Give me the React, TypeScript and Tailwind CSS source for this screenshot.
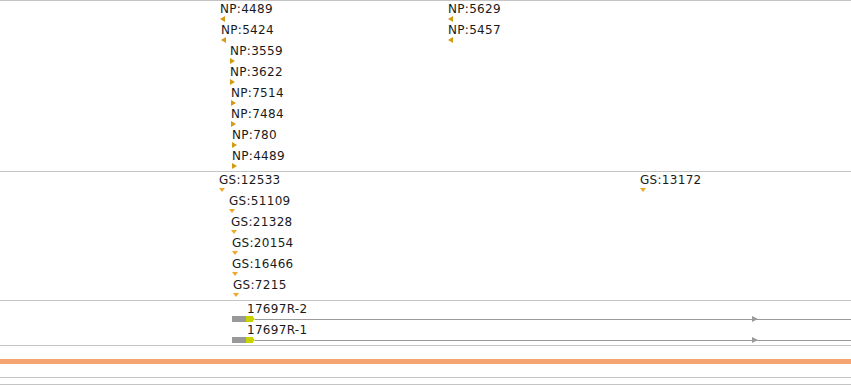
import React from 'react';

type Feature = { label: string; x: number; y: number; dir: 'left' | 'right' | 'down' };

const npFeatures: Feature[] = [
  { label: 'NP:4489', x: 220, y: 1, dir: 'left' },
  { label: 'NP:5424', x: 221, y: 22, dir: 'left' },
  { label: 'NP:3559', x: 230, y: 43, dir: 'right' },
  { label: 'NP:3622', x: 230, y: 64, dir: 'right' },
  { label: 'NP:7514', x: 231, y: 85, dir: 'right' },
  { label: 'NP:7484', x: 231, y: 106, dir: 'right' },
  { label: 'NP:780', x: 232, y: 127, dir: 'right' },
  { label: 'NP:4489', x: 232, y: 148, dir: 'right' },
  { label: 'NP:5629', x: 448, y: 1, dir: 'left' },
  { label: 'NP:5457', x: 448, y: 22, dir: 'left' },
];

const gsFeatures: Feature[] = [
  { label: 'GS:12533', x: 219, y: 1, dir: 'down' },
  { label: 'GS:51109', x: 229, y: 22, dir: 'down' },
  { label: 'GS:21328', x: 231, y: 43, dir: 'down' },
  { label: 'GS:20154', x: 232, y: 64, dir: 'down' },
  { label: 'GS:16466', x: 232, y: 85, dir: 'down' },
  { label: 'GS:7215', x: 233, y: 106, dir: 'down' },
  { label: 'GS:13172', x: 640, y: 1, dir: 'down' },
];

const transcripts = [
  { label: '17697R-2', y: 1 },
  { label: '17697R-1', y: 22 },
];

const Marker = ({ dir }: { dir: Feature['dir'] }) => {
  if (dir === 'down') {
    return (
      <svg width="6" height="4" viewBox="0 0 6 4" className="block">
        <polygon points="0,0 6,0 3,4" fill="#f0a828" />
      </svg>
    );
  }
  return (
    <svg width="5" height="6" viewBox="0 0 5 6" className="block">
      <polygon points={dir === 'left' ? '5,0 0,3 5,6' : '0,0 5,3 0,6'} fill="#d49a12" />
    </svg>
  );
};

const FeatureLabel = ({ f }: { f: Feature }) => (
  <div className="absolute flex flex-col" style={{ left: f.x, top: f.y }}>
    <span className="text-[12px] leading-[14px] tracking-[0.3px] text-[#1a1a1a] whitespace-nowrap">{f.label}</span>
    <div className={f.dir === 'down' ? 'pt-[1px]' : ''}>
      <Marker dir={f.dir} />
    </div>
  </div>
);

export default function App() {
  return (
    <div className="w-[851px] h-[385px] bg-white overflow-hidden" style={{ fontFamily: '"DejaVu Sans", Verdana, sans-serif' }}>
      <div className="relative h-[171px] border-t border-[#c4c4c4]">
        {npFeatures.map((f, i) => (
          <FeatureLabel key={i} f={f} />
        ))}
      </div>
      <div className="relative h-[129px] border-t border-[#c4c4c4]">
        {gsFeatures.map((f, i) => (
          <FeatureLabel key={i} f={f} />
        ))}
      </div>
      <div className="relative h-[45px] border-t border-[#c4c4c4]">
        {transcripts.map((t, i) => (
          <div key={i} className="absolute left-[232px] right-0 flex flex-col" style={{ top: t.y }}>
            <span className="pl-[15px] text-[12px] leading-[14px] tracking-[0.3px] text-[#1a1a1a] whitespace-nowrap">{t.label}</span>
            <div className="flex items-center h-[6px]">
              <div className="w-[14px] h-[6px] bg-[#999999]" />
              <div className="w-[7px] h-[6px] bg-[#c8d400]" />
              <svg width="2" height="6" viewBox="0 0 2 6" className="block">
                <polygon points="0,1 2,3 0,5" fill="#c8d400" />
              </svg>
              <div className="relative flex-1 h-[1px] bg-[#9a9a9a]">
                <svg width="6" height="6" viewBox="0 0 6 6" className="absolute left-[497px] top-[-3px]">
                  <polygon points="0,0 6,3 0,6" fill="#9a9a9a" />
                </svg>
              </div>
            </div>
          </div>
        ))}
      </div>
      <div className="h-[14px] border-t border-[#c4c4c4]" />
      <div className="h-[5px] bg-[#f5a571]" />
      <div className="h-[13px]" />
      <div className="h-[7px] border-t border-[#c4c4c4]" />
      <div className="h-[1px] border-t border-[#c4c4c4]" />
    </div>
  );
}
